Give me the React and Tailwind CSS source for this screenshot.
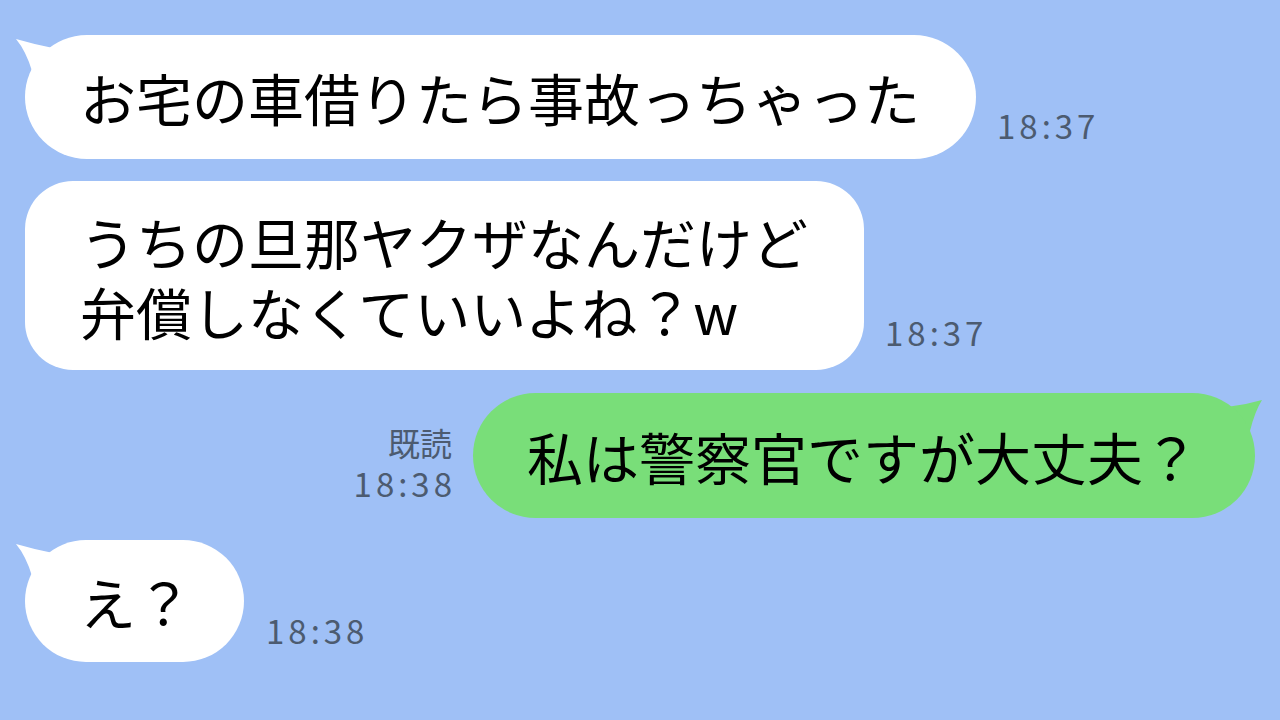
import React from "react";

const font = { fontFamily: '"Noto Sans CJK JP", "Noto Sans", sans-serif' };

function LeftTail() {
  return (
    <svg className="absolute left-[-12px] top-0" width="48" height="48" viewBox="-12 0 48 48">
      <path d="M -9 4 Q 8 9 28 13 L 22 42 L 7 36 Q 1 16 -9 4 Z" fill="#ffffff" />
    </svg>
  );
}

function RightTail() {
  return (
    <svg className="absolute right-[-12px] top-0" width="48" height="48" viewBox="-36 0 48 48">
      <path d="M 7 7 Q -10 12 -28 14 L -22 42 L -5 38 Q 0 18 7 7 Z" fill="#79de79" />
    </svg>
  );
}

function Time({ children, className = "" }) {
  return (
    <div className={"text-[33px] leading-none tracking-[4px] text-[#4c5b70] " + className}>{children}</div>
  );
}

export default function App() {
  return (
    <div className="w-[1280px] h-[720px] bg-[#9fc0f6] overflow-hidden flex flex-col px-[25px] pt-[35px]" style={font}>
      {/* Row 1 */}
      <div className="flex items-end">
        <div className="relative">
          <LeftTail />
          <div className="relative h-[124px] rounded-full bg-white pl-[55px] pr-[56px] flex items-center text-[56px] leading-none text-black whitespace-nowrap">
            お宅の車借りたら事故っちゃった
          </div>
        </div>
        <Time className="ml-[21px] mb-[17px]">18:37</Time>
      </div>

      {/* Row 2 */}
      <div className="flex items-end mt-[22px]">
        <div className="h-[189px] rounded-[48px] bg-white pl-[55px] pr-[56px] flex flex-col justify-center text-[56px] leading-[70px] text-black whitespace-nowrap">
          <div>うちの旦那ヤクザなんだけど</div>
          <div>弁償しなくていいよね？w</div>
        </div>
        <Time className="ml-[21px] mb-[21px]">18:37</Time>
      </div>

      {/* Row 3 */}
      <div className="flex items-end justify-end mt-[23px]">
        <div className="flex flex-col items-end mr-[17px] mb-[18px]">
          <div className="text-[32px] leading-none text-[#4c5b70] mb-[9px] mr-[4px]">既読</div>
          <Time>18:38</Time>
        </div>
        <div className="relative">
          <RightTail />
          <div className="relative h-[125px] rounded-full bg-[#79de79] pl-[54px] pr-[56px] flex items-center text-[56px] leading-none text-black whitespace-nowrap">
            私は警察官ですが大丈夫？
          </div>
        </div>
      </div>

      {/* Row 4 */}
      <div className="flex items-end mt-[22px]">
        <div className="relative">
          <LeftTail />
          <div className="relative h-[122px] rounded-full bg-white pl-[55px] pr-[52px] flex items-center text-[56px] leading-none text-black whitespace-nowrap">
            え？
          </div>
        </div>
        <Time className="ml-[22px] mb-[15px]">18:38</Time>
      </div>
    </div>
  );
}
